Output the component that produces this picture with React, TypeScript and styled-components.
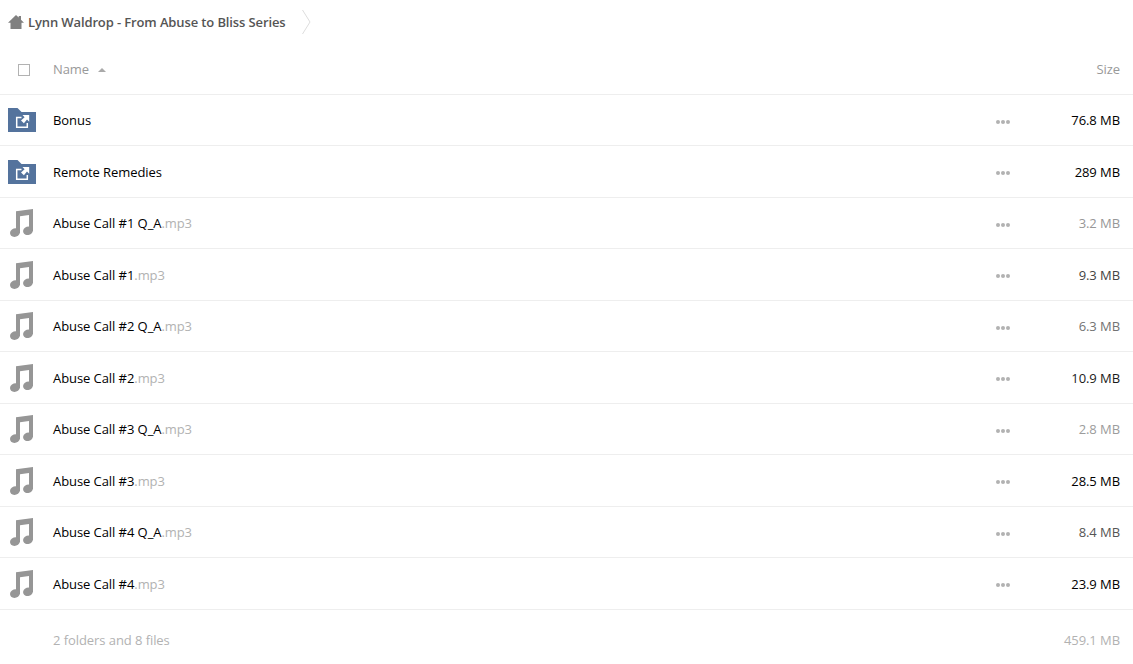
import styled, { createGlobalStyle } from 'styled-components'

const GlobalStyle = createGlobalStyle`
  body {
    margin: 0;
    background: #ffffff;
    font-family: 'Open Sans', 'Noto Sans', sans-serif;
    font-size: 13px;
    line-height: 18px;
    letter-spacing: -0.07px;
    color: #000000;
  }
`;

const Container = styled.div`
  width: 100%;
  height: 664px;
  overflow: hidden;
`;

const Breadcrumb = styled.div`
  display: flex;
  align-items: center;
  height: 44px;
  padding-left: 8px;
  color: #555555;
  font-weight: 600;
  letter-spacing: -0.12px;

  .home {
    margin-right: 4px;
  }

  .title {
    white-space: nowrap;
  }

  .arrow {
    margin-left: 16px;
  }
`;

const Line = styled.div`
  box-sizing: border-box;
  display: grid;
  grid-template-columns: 53px 1fr 40px 84px;
  padding-right: 13px;
`;

const HeaderRow = styled(Line)`
  height: 51px;
  padding-top: 16px;
  border-bottom: 1px solid #eeeeee;
  color: #999999;

  .check {
    width: 10px;
    height: 10px;
    margin: 4px 0 0 18px;
    border: 1px solid #b2b2b2;
  }

  .name {
    display: flex;
    align-items: center;
    gap: 9px;
    height: 18px;
  }

  .sort {
    margin-top: 2px;
  }
`;

const Row = styled(Line)<{ tall: boolean }>`
  height: ${({ tall }) => tall ? 52 : 51}px;
  border-bottom: 1px solid #eeeeee;

  .icon {
    padding: ${({ tall }) => tall ? 12 : 11}px 0 0 8px;
    height: 28px;
  }

  .name {
    padding-top: ${({ tall }) => tall ? 17 : 16}px;
    white-space: nowrap;
  }

  .ext {
    color: #b2b2b2;
  }

  .more {
    padding-top: 25px;
    height: 4px;
  }
`;

const Size = styled.span<{ color: string; top?: number }>`
  padding-top: ${({ top }) => top || 0}px;
  color: ${({ color }) => color};
  text-align: right;
  white-space: nowrap;
`;

const Footer = styled(Line)`
  padding-top: 21px;
  color: #b2b2b2;
`;

const svg_block = { display: 'block' };

const HomeIcon = () => (
  <svg className="home" width="16" height="14" viewBox="0 0 16 14" fill="#808080">
    <path d="M8 0 L10.7 2.6 V1 H13 V4.8 L16 7.8 H13.5 V14 H2.5 V7.8 H0 Z" />
  </svg>
);

const CrumbArrow = () => (
  <svg className="arrow" width="9" height="26" viewBox="0 0 9 26" fill="none" stroke="#dddddd">
    <path d="M0.5 1 L8 13 L0.5 25" />
  </svg>
);

const SortIcon = () => (
  <svg className="sort" width="8" height="4" viewBox="0 0 8 4" fill="#aaaaaa">
    <path d="M4 0 L8 4 H0 Z" />
  </svg>
);

const FolderIcon = () => (
  <svg style={svg_block} width="28" height="28" viewBox="0 0 28 28">
    <path d="M0 2 H9.5 L13.5 6 H28 V26 H0 Z" fill="#54739d" />
    <path d="M13.5 11.5 H8.7 V21.3 H19.3 V17" fill="none" stroke="#ffffff" strokeWidth="1.5" />
    <path d="M14.5 9 H21.2 V15.8 L19 13.6 L15.9 17.2 L13 14.4 L16.6 11.2 Z" fill="#ffffff" />
  </svg>
);

const MusicIcon = () => (
  <svg style={svg_block} width="28" height="28" viewBox="0 0 28 28" fill="#969696">
    <path d="M8 2.2 L25 0 V22 H21 V6 L12 7.2 V24 H8 Z" />
    <ellipse cx="7" cy="23.6" rx="5" ry="4.2" transform="rotate(-18 7 23.6)" />
    <ellipse cx="20" cy="21.8" rx="5" ry="4.2" transform="rotate(-18 20 21.8)" />
  </svg>
);

const MoreIcon = () => (
  <svg style={svg_block} width="14" height="4" viewBox="0 0 14 4" fill="#b2b2b2">
    <circle cx="2" cy="2" r="2" />
    <circle cx="7" cy="2" r="2" />
    <circle cx="12" cy="2" r="2" />
  </svg>
);

interface item {
  name: string;
  ext?: string;
  size: string;
  color: string;
}

const items: item[] = [
  { name: 'Bonus', size: '76.8 MB', color: '#000000' },
  { name: 'Remote Remedies', size: '289 MB', color: '#000000' },
  { name: 'Abuse Call #1 Q_A', ext: '.mp3', size: '3.2 MB', color: '#979797' },
  { name: 'Abuse Call #1', ext: '.mp3', size: '9.3 MB', color: '#444444' },
  { name: 'Abuse Call #2 Q_A', ext: '.mp3', size: '6.3 MB', color: '#737373' },
  { name: 'Abuse Call #2', ext: '.mp3', size: '10.9 MB', color: '#1a1a1a' },
  { name: 'Abuse Call #3 Q_A', ext: '.mp3', size: '2.8 MB', color: '#9c9c9c' },
  { name: 'Abuse Call #3', ext: '.mp3', size: '28.5 MB', color: '#000000' },
  { name: 'Abuse Call #4 Q_A', ext: '.mp3', size: '8.4 MB', color: '#555555' },
  { name: 'Abuse Call #4', ext: '.mp3', size: '23.9 MB', color: '#000000' },
];

const App = () => {
  return (
    <Container>
      <GlobalStyle />
      <Breadcrumb>
        <HomeIcon />
        <span className="title">Lynn Waldrop - From Abuse to Bliss Series</span>
        <CrumbArrow />
      </Breadcrumb>

      <HeaderRow>
        <div><div className="check" /></div>
        <div className="name">
          <span>Name</span>
          <SortIcon />
        </div>
        <div />
        <Size color="#999999">Size</Size>
      </HeaderRow>

      {
        items.map(({ name, ext, size, color }, index) => {
          const tall = index % 2 === 1;
          return (
            <Row key={name} tall={tall}>
              <div className="icon">{ext ? <MusicIcon /> : <FolderIcon />}</div>
              <div className="name">
                {name}<span className="ext">{ext}</span>
              </div>
              <div className="more"><MoreIcon /></div>
              <Size color={color} top={tall ? 17 : 16}>{size}</Size>
            </Row>
          )
        })
      }

      <Footer>
        <div />
        <span>2 folders and 8 files</span>
        <div />
        <Size color="#b2b2b2">459.1 MB</Size>
      </Footer>
    </Container>
  )
}

export default App
